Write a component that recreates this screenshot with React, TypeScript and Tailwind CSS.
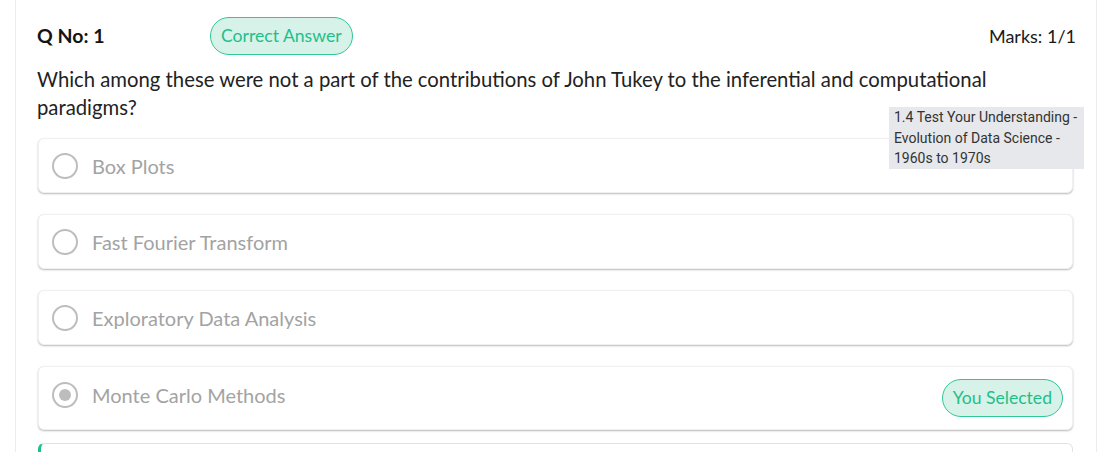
import React from 'react';

const OPTIONS = [
  { label: 'Box Plots', selected: false },
  { label: 'Fast Fourier Transform', selected: false },
  { label: 'Exploratory Data Analysis', selected: false },
  { label: 'Monte Carlo Methods', selected: true },
];

function Radio({ checked }: { checked: boolean }) {
  return (
    <span className="flex h-[26px] w-[26px] shrink-0 items-center justify-center rounded-full border-2 border-[#bdbdbd] bg-white">
      {checked && <span className="h-[12px] w-[12px] rounded-full bg-[#bdbdbd]" />}
    </span>
  );
}

function Pill({ children }: { children: React.ReactNode }) {
  return (
    <span className="inline-flex h-[38px] items-center rounded-full border border-[#2fc793] bg-[#d7f2e8] px-[10px] text-[17.6px] text-[#1fbf8a]">
      {children}
    </span>
  );
}

export default function App() {
  return (
    <div className="h-[452px] w-[1102px] overflow-hidden bg-white font-['Lato','Noto_Sans',sans-serif]">
      <div className="ml-[15px] w-[1082px] border-x border-[#ececec] pl-[21px] pr-[20px] pt-[17px]">
        <div className="flex items-center">
          <div className="w-[173px] text-[19.5px] font-bold text-[#141414]">Q No: 1</div>
          <Pill>Correct Answer</Pill>
          <div className="ml-auto text-[18px] text-[#1a1a1a]">Marks: 1/1</div>
        </div>

        <div className="relative">
          <p className="mt-[10px] w-[990px] text-[20.3px] leading-[28px] text-[#222]">
            Which among these were not a part of the contributions of John Tukey to the inferential and computational
            paradigms?
          </p>
          <div className="absolute right-[-8px] top-[42px] z-10 w-[195px] bg-[#e6e8ec] px-[5px] py-0 font-['Roboto',sans-serif] text-[14px] leading-[20.5px] text-[#333]">
            1.4 Test Your Understanding - Evolution of Data Science - 1960s to 1970s
          </div>
        </div>

        <div className="mt-[17px] flex flex-col gap-[21px] pl-px pr-[3px]">
          {OPTIONS.map((o) => (
            <div
              key={o.label}
              className={
                'flex items-center gap-[14px] rounded-[6px] border border-[#f0f0f0] bg-white pl-[13px] pr-[9px] shadow-[0_1px_2px_rgba(0,0,0,0.28)] ' +
                (o.selected ? 'h-[64px] pb-[6px]' : 'h-[55px]')
              }
            >
              <Radio checked={o.selected} />
              <span className="text-[20px] text-[#a3a3a3]">{o.label}</span>
              {o.selected && (
                <span className="ml-auto pt-[6px]">
                  <Pill>You Selected</Pill>
                </span>
              )}
            </div>
          ))}
          <div className="-mt-[8px] h-[55px] rounded-[6px] border border-[#dfe3e8] border-l-[3px] border-l-[#1fbf8a] bg-white" />
        </div>
      </div>
    </div>
  );
}
